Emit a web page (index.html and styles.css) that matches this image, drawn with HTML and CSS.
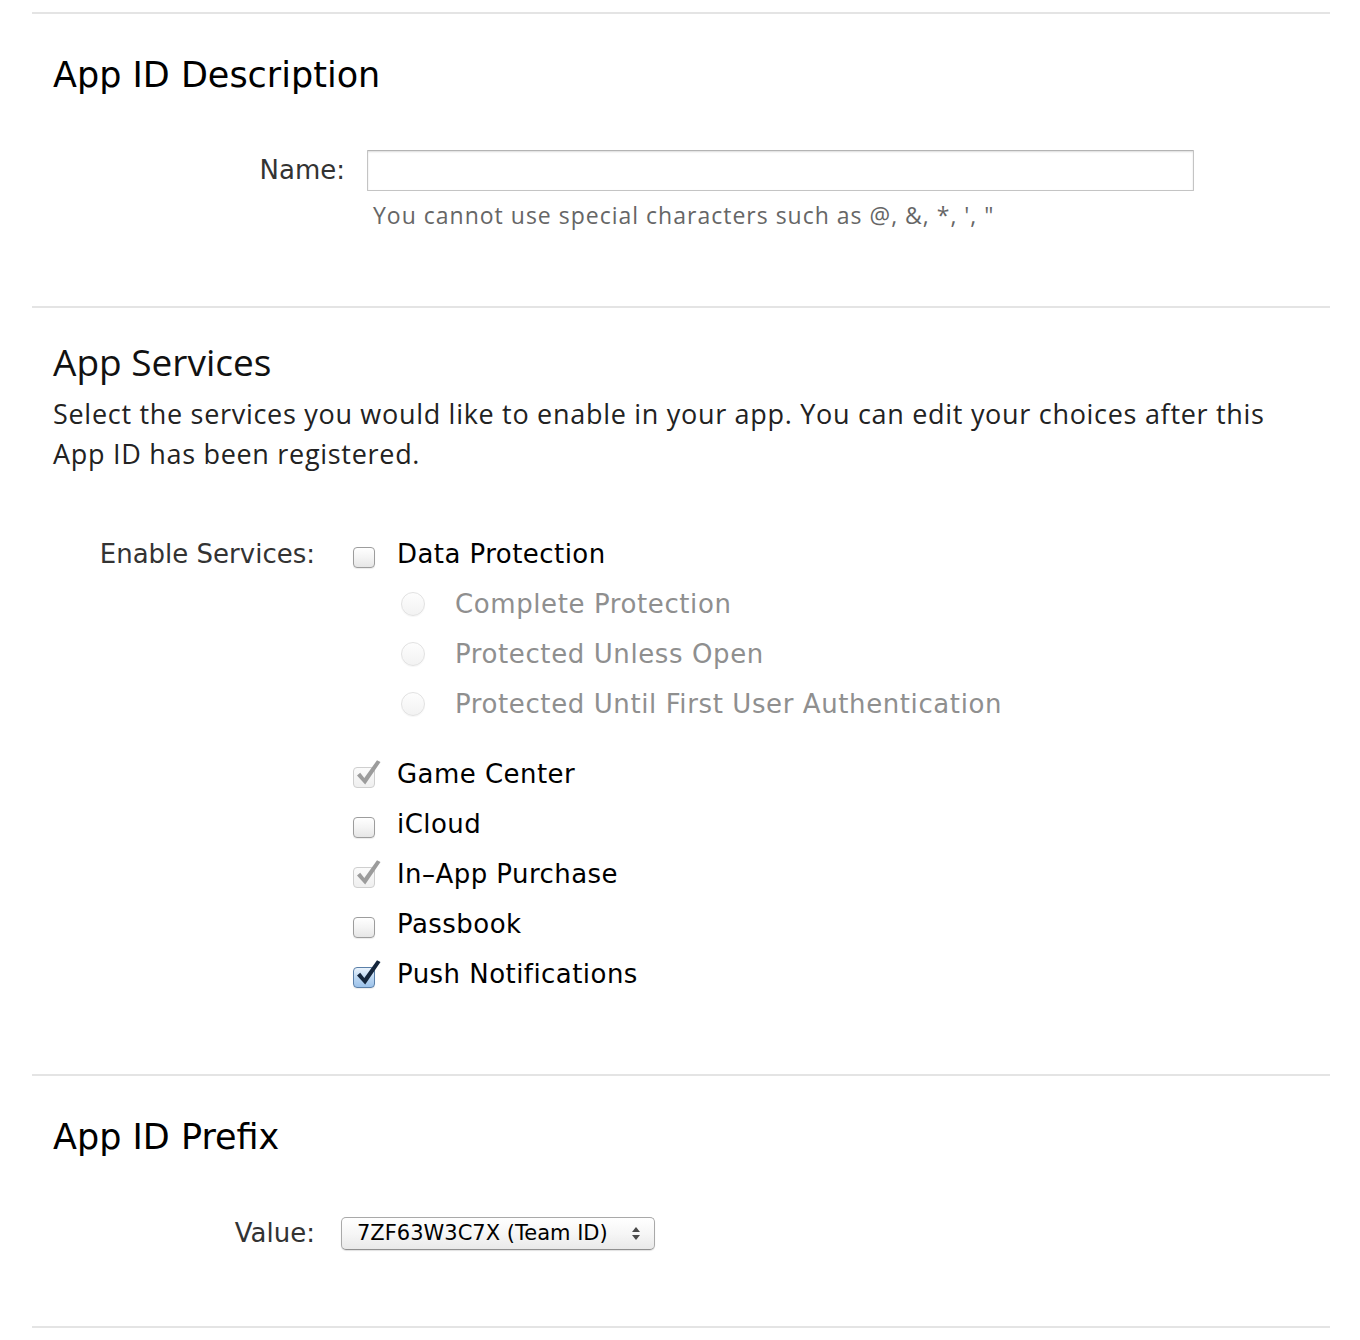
FILE: index.html
```html
<!DOCTYPE html>
<html lang="en">
<head>
<meta charset="utf-8">
<title>Register App ID</title>
<link rel="stylesheet" href="styles.css">
</head>
<body>
<div class="page">
  <hr class="rule">
  <section class="section sec-desc">
    <h2 class="title">App ID Description</h2>
    <div class="form-row row-name">
      <div class="label label-name">Name:</div>
      <div class="field">
        <input class="text-input" type="text" aria-label="Name">
        <p class="hint">You cannot use special characters such as @, &amp;, *, ', "</p>
      </div>
    </div>
  </section>
  <hr class="rule">
  <section class="section sec-services">
    <h2 class="title title-alt">App Services</h2>
    <p class="intro">Select the services you would like to enable in your app. You can edit your choices after this<br>App ID has been registered.</p>
    <div class="form-row row-services">
      <div class="label label-wide">Enable Services:</div>
      <div class="options">
        <div class="opt"><span class="cb"></span><span class="opt-text">Data Protection</span></div>
        <div class="sub-opts">
          <div class="opt sub"><span class="radio"></span><span class="opt-text muted">Complete Protection</span></div>
          <div class="opt sub"><span class="radio"></span><span class="opt-text muted">Protected Unless Open</span></div>
          <div class="opt sub"><span class="radio"></span><span class="opt-text muted">Protected Until First User Authentication</span></div>
        </div>
        <div class="opt"><span class="cb cb-locked"><svg class="tick" viewBox="0 0 28 28" width="28" height="28"><path d="M2 16.5 L5.2 13.8 L9.3 19 L22 1.2 L25.5 3 L10.2 25.5 Z"/></svg></span><span class="opt-text">Game Center</span></div>
        <div class="opt"><span class="cb"></span><span class="opt-text">iCloud</span></div>
        <div class="opt"><span class="cb cb-locked"><svg class="tick" viewBox="0 0 28 28" width="28" height="28"><path d="M2 16.5 L5.2 13.8 L9.3 19 L22 1.2 L25.5 3 L10.2 25.5 Z"/></svg></span><span class="opt-text">In–App Purchase</span></div>
        <div class="opt"><span class="cb"></span><span class="opt-text">Passbook</span></div>
        <div class="opt"><span class="cb cb-on"><svg class="tick" viewBox="0 0 28 28" width="28" height="28"><path d="M2 16.5 L5.2 13.8 L9.3 19 L22 1.2 L25.5 3 L10.2 25.5 Z"/></svg></span><span class="opt-text">Push Notifications</span></div>
      </div>
    </div>
  </section>
  <hr class="rule">
  <section class="section sec-prefix">
    <h2 class="title">App ID Prefix</h2>
    <div class="form-row row-value">
      <div class="label label-wide">Value:</div>
      <div class="select">
        <span class="select-text">7ZF63W3C7X (Team ID)</span>
        <span class="arrows"><span class="arr-up"></span><span class="arr-down"></span></span>
      </div>
    </div>
  </section>
  <hr class="rule">
</div>
</body>
</html>
```
FILE: styles.css
```css
html, body {
  margin: 0;
  padding: 0;
  background: #ffffff;
}

body {
  font-family: "DejaVu Sans", "Liberation Sans", sans-serif;
  color: #000;
}

.page {
  padding: 12px 30px 0 32px;
}

.rule {
  border: 0;
  height: 2px;
  margin: 0;
  background: #e4e4e4;
}

.section {
  padding-left: 21px;
}

.sec-desc {
  padding-top: 40px;
  padding-bottom: 76px;
}

.sec-services {
  padding-top: 32px;
  padding-bottom: 75px;
}

.sec-prefix {
  padding-top: 40px;
  padding-bottom: 76px;
}

.title {
  margin: 0;
  font-size: 35px;
  line-height: 42px;
  font-weight: normal;
  color: #000;
}

.title-alt {
  font-family: "Open Sans", "Noto Sans", sans-serif;
  font-size: 37px;
  line-height: 44px;
  color: #111;
}

.intro {
  margin: 10px 0 0;
  font-family: "Open Sans", "Noto Sans", sans-serif;
  font-size: 27px;
  letter-spacing: 0.7px;
  line-height: 40px;
  color: #222;
  white-space: nowrap;
}

.form-row {
  display: flex;
}

.label {
  flex: none;
  text-align: right;
  font-size: 26px;
  color: #333;
}

.row-name {
  margin-top: 54px;
  align-items: flex-start;
}

.label-name {
  width: 292px;
  line-height: 41px;
}

.field {
  margin-left: 22px;
}

.text-input {
  display: block;
  box-sizing: border-box;
  width: 827px;
  height: 41px;
  margin: 0;
  padding: 0 8px;
  border: 1px solid #c4c4c4;
  border-top-color: #b4b4b4;
  border-radius: 1px;
  background: #fff;
  box-shadow: inset 0 1px 2px rgba(0, 0, 0, 0.14);
  font-size: 22px;
  outline: none;
}

.hint {
  margin: 9px 0 0 6px;
  font-family: "Open Sans", "Noto Sans", sans-serif;
  font-size: 23px;
  letter-spacing: 1px;
  line-height: 30px;
  color: #666;
  white-space: nowrap;
}

.row-services {
  margin-top: 55px;
  align-items: flex-start;
}

.label-wide {
  width: 262px;
  line-height: 50px;
}

.options {
  margin-left: 38px;
  display: flex;
  flex-direction: column;
}

.opt {
  display: flex;
  align-items: center;
  height: 50px;
}

.opt-text {
  font-size: 26px;
  letter-spacing: 0.45px;
  line-height: 50px;
  color: #000;
  margin-left: 22px;
  white-space: nowrap;
}

.opt-text.muted {
  color: #8f8f8f;
  margin-left: 30px;
  letter-spacing: 0.6px;
}

.sub-opts {
  margin-bottom: 20px;
}

.opt.sub {
  padding-left: 48px;
}

.cb {
  position: relative;
  flex: none;
  box-sizing: border-box;
  width: 22px;
  height: 21px;
  margin-top: 7px;
  border: 1px solid #9d9d9d;
  border-radius: 4px;
  background: linear-gradient(#ffffff 0%, #f4f4f4 50%, #e6e6e6 100%);
  box-shadow: 0 1px 1px rgba(0, 0, 0, 0.08);
}

.cb-locked {
  border-color: #cfcfcf;
  background: linear-gradient(#fbfbfb, #efefef);
  box-shadow: none;
}

.cb-on {
  border-color: #5a7fa8;
  background: linear-gradient(#eaf3fc 0%, #b9d5f1 55%, #9cc2ea 100%);
}

.tick {
  position: absolute;
  left: 1px;
  top: -9px;
  overflow: visible;
}

.cb-locked .tick path {
  fill: #9c9c9c;
}

.cb-on .tick path {
  fill: #15263c;
}

.radio {
  flex: none;
  box-sizing: border-box;
  width: 24px;
  height: 24px;
  border-radius: 50%;
  border: 1px solid #e2e2e2;
  background: linear-gradient(#fdfdfd, #f2f2f2);
  box-shadow: 0 1px 1px rgba(0, 0, 0, 0.04);
}

.row-value {
  margin-top: 59px;
  align-items: center;
}

.row-value .label-wide {
  line-height: 33px;
}

.select {
  margin-left: 26px;
  box-sizing: border-box;
  width: 314px;
  height: 33px;
  display: flex;
  align-items: center;
  justify-content: space-between;
  padding: 0 14px 0 15px;
  border: 1px solid #a9a9a9;
  border-bottom-color: #8f8f8f;
  border-radius: 5px;
  background: linear-gradient(#ffffff 0%, #f6f6f6 50%, #e9e9e9 100%);
  box-shadow: 0 1px 1px rgba(0, 0, 0, 0.12);
}

.select-text {
  font-size: 21px;
  line-height: 31px;
  color: #000;
  white-space: nowrap;
}

.arrows {
  display: flex;
  flex-direction: column;
  align-items: center;
  gap: 3px;
}

.arr-up {
  width: 0;
  height: 0;
  border-left: 4px solid transparent;
  border-right: 4px solid transparent;
  border-bottom: 5px solid #4a4a4a;
}

.arr-down {
  width: 0;
  height: 0;
  border-left: 4px solid transparent;
  border-right: 4px solid transparent;
  border-top: 5px solid #4a4a4a;
}
```
